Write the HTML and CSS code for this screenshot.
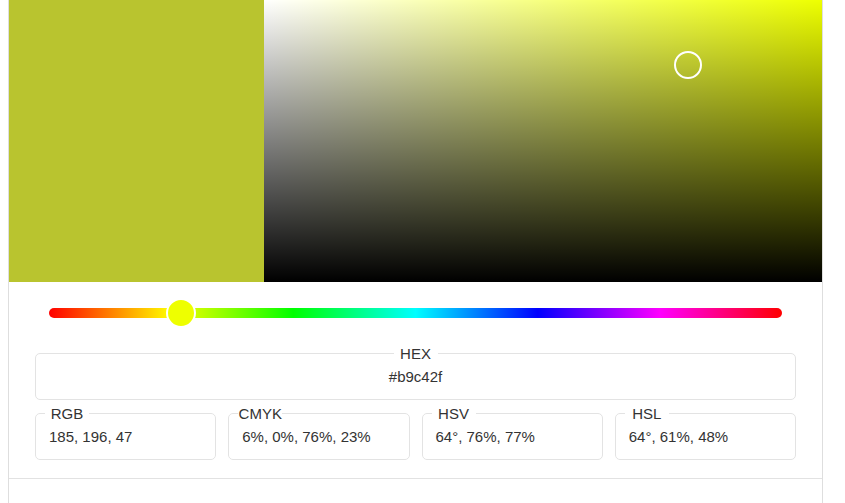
FILE: index.html
```html
<!DOCTYPE html>
<html lang="en">
<head>
<meta charset="utf-8">
<title>Color Picker</title>
<link rel="stylesheet" href="styles.css">
</head>
<body>
<div class="card">
  <div class="top">
    <div class="swatch"></div>
    <div class="sv-area">
      <span class="sv-handle" style="left:76%; top:23%;"></span>
    </div>
  </div>
  <div class="controls">
    <div class="hue">
      <div class="hue-track"></div>
      <span class="hue-thumb" style="left:18%;"></span>
    </div>
    <fieldset class="field field-hex">
      <legend><span class="label">HEX</span></legend>
      <div class="value">#b9c42f</div>
    </fieldset>
    <div class="row">
      <fieldset class="field">
        <legend><span class="label">RGB</span></legend>
        <div class="value">185, 196, 47</div>
      </fieldset>
      <fieldset class="field">
        <legend><span class="label">CMYK</span></legend>
        <div class="value">6%, 0%, 76%, 23%</div>
      </fieldset>
      <fieldset class="field">
        <legend><span class="label">HSV</span></legend>
        <div class="value">64°, 76%, 77%</div>
      </fieldset>
      <fieldset class="field">
        <legend><span class="label">HSL</span></legend>
        <div class="value">64°, 61%, 48%</div>
      </fieldset>
    </div>
  </div>
  <div class="footer"></div>
</div>
</body>
</html>
```
FILE: styles.css
```css
* { box-sizing: border-box; }
html, body { overflow: hidden; }
body {
  margin: 0 8px;
  font-family: "Liberation Sans", Arial, sans-serif;
  color: #333;
  background: #fff;
}
.card {
  width: 815px;
  border: 1px solid #dedede;
  border-top: 0;
  background: #fff;
}
.top {
  display: flex;
  height: 282px;
}
.swatch {
  width: 255px;
  background: #b9c42f;
}
.sv-area {
  flex: 1;
  position: relative;
  background:
    linear-gradient(to top, #000, rgba(0,0,0,0)),
    linear-gradient(to right, #fff, rgba(255,255,255,0)),
    #eeff00;
}
.sv-handle {
  position: absolute;
  width: 28px;
  height: 28px;
  border: 2px solid #fff;
  border-radius: 50%;
  transform: translate(-50%, -50%);
}
.controls {
  padding: 16px 26px 18px 26px;
  border-bottom: 1px solid #e2e2e2;
}
.hue {
  position: relative;
  height: 30px;
  margin: 0 14px 17px 14px;
  display: flex;
  align-items: center;
}
.hue-track {
  flex: 1;
  height: 10px;
  border-radius: 5px;
  background: linear-gradient(to right, #f00 0%, #ff0 16.66%, #0f0 33.33%, #0ff 50%, #00f 66.66%, #f0f 83.33%, #f00 100%);
}
.hue-thumb {
  position: absolute;
  top: 0;
  width: 30px;
  height: 30px;
  border: 2px solid #fff;
  border-radius: 50%;
  background: #eeff00;
  transform: translateX(-50%);
}
.field {
  margin: 0;
  padding: 0 13px 14px 13px;
  border: 1px solid #e3e3e3;
  border-radius: 5px;
  min-width: 0;
}
.field legend {
  margin-left: -4px;
  padding: 0;
  font-size: 15px;
  line-height: 17px;
}
.field .label {
  display: block;
  width: 44px;
  text-align: center;
}
.field .value {
  padding-top: 6px;
  font-size: 15px;
  line-height: 17px;
  white-space: nowrap;
}
.field-hex legend {
  margin: 0 auto;
}
.field-hex .value {
  text-align: center;
}
.row {
  display: grid;
  grid-template-columns: repeat(4, 1fr);
  column-gap: 12px;
  margin-top: 5px;
}
.footer {
  height: 40px;
}
```
